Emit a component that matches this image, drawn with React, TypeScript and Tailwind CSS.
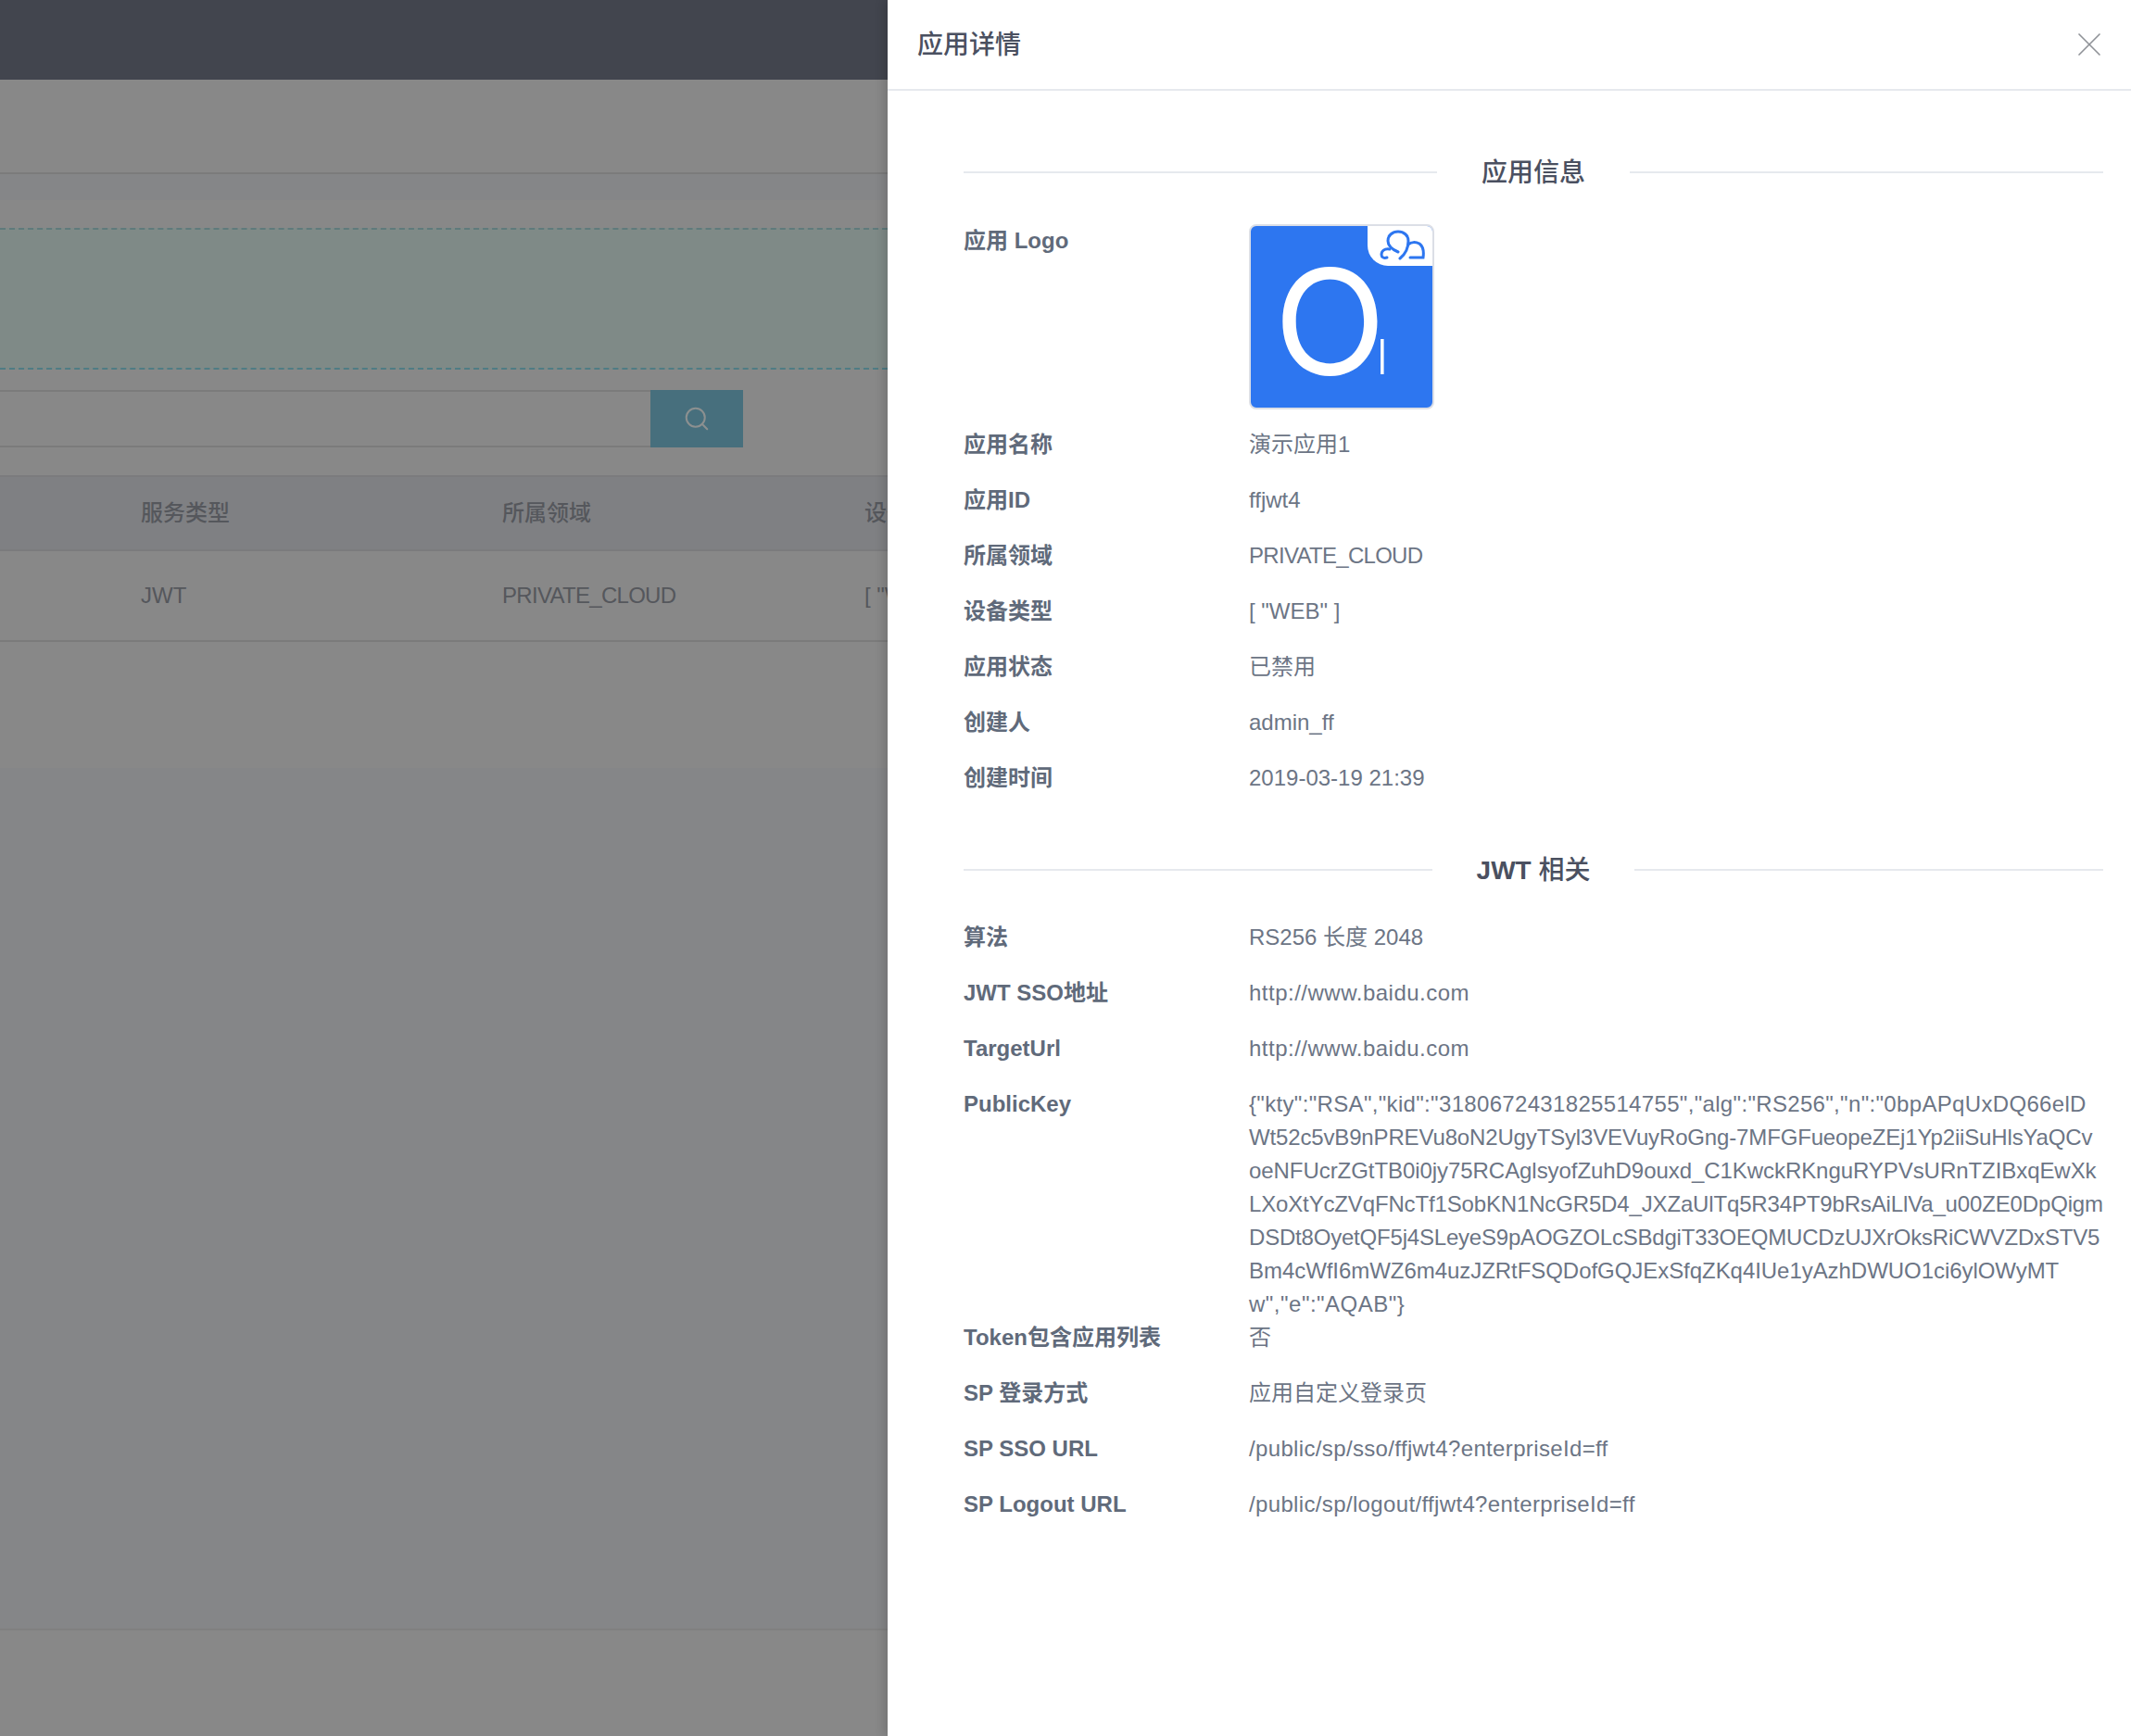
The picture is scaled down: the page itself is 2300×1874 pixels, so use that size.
import type { ReactNode } from "react";
import { Search, X } from "lucide-react";

const font = "font-['Liberation_Sans','Noto_Sans_CJK_SC',sans-serif]";

const infoRows = [
  { label: "应用名称", value: "演示应用1" },
  { label: "应用ID", value: "ffjwt4" },
  { label: "所属领域", value: "PRIVATE_CLOUD", tracking: "tracking-[-0.7px]" },
  { label: "设备类型", value: '[ "WEB" ]' },
  { label: "应用状态", value: "已禁用" },
  { label: "创建人", value: "admin_ff" },
  { label: "创建时间", value: "2019-03-19 21:39" },
];

const jwtTop = [
  { label: "算法", value: "RS256 长度 2048" },
  { label: "JWT SSO地址", value: "http://www.baidu.com", tracking: "tracking-[0.5px]" },
  { label: "TargetUrl", value: "http://www.baidu.com", tracking: "tracking-[0.5px]" },
];

const publicKey = [
  { text: '{"kty":"RSA","kid":"3180672431825514755","alg":"RS256","n":"0bpAPqUxDQ66elD', tracking: "tracking-[0.33px]" },
  { text: "Wt52c5vB9nPREVu8oN2UgyTSyl3VEVuyRoGng-7MFGFueopeZEj1Yp2iiSuHlsYaQCv", tracking: "tracking-[-0.15px]" },
  { text: "oeNFUcrZGtTB0i0jy75RCAglsyofZuhD9ouxd_C1KwckRKnguRYPVsURnTZIBxqEwXk", tracking: "tracking-[-0.06px]" },
  { text: "LXoXtYcZVqFNcTf1SobKN1NcGR5D4_JXZaUlTq5R34PT9bRsAiLlVa_u00ZE0DpQigm", tracking: "tracking-[-0.15px]" },
  { text: "DSDt8OyetQF5j4SLeyeS9pAOGZOLcSBdgiT33OEQMUCDzUJXrOksRiCWVZDxSTV5", tracking: "tracking-[-0.2px]" },
  { text: "Bm4cWfI6mWZ6m4uzJZRtFSQDofGQJExSfqZKq4IUe1yAzhDWUO1ci6ylOWyMT", tracking: "tracking-[-0.05px]" },
  { text: 'w","e":"AQAB"}', tracking: "tracking-[0.5px]" },
];

const jwtBottom = [
  { label: "Token包含应用列表", value: "否" },
  { label: "SP 登录方式", value: "应用自定义登录页" },
  { label: "SP SSO URL", value: "/public/sp/sso/ffjwt4?enterpriseId=ff", tracking: "tracking-[0.35px]" },
  { label: "SP Logout URL", value: "/public/sp/logout/ffjwt4?enterpriseId=ff", tracking: "tracking-[0.35px]" },
];

function Row({ label, value, tracking = "" }: { label: string; value: string; tracking?: string }) {
  return (
    <div className="flex h-[60px] leading-[36px]">
      <div className="w-[308px] shrink-0 font-bold text-[#606a7a]">{label}</div>
      <div className={`text-[#6c7585] ${tracking}`}>{value}</div>
    </div>
  );
}

function SectionTitle({ children }: { children: ReactNode }) {
  return (
    <div className="flex h-[40px] items-center gap-[48px]">
      <div className="h-[2px] flex-1 bg-[#e6e9ee]" />
      <div className="pt-[1px] text-[28px] font-medium text-[#4a5060]">{children}</div>
      <div className="h-[2px] flex-1 bg-[#e6e9ee]" />
    </div>
  );
}

function AppLogo() {
  return (
    <div className="relative h-[200px] w-[200px] rounded-[8px] border-2 border-[#dcdfe6] bg-[#2d76f0] font-['Inter',sans-serif] text-white">
      <div className="flex items-baseline pt-[24px] pl-[25px] leading-none">
        <span className="text-[158px] font-normal tracking-[-10px]">O</span>
        <span className="text-[52px] font-light">l</span>
      </div>
      <div className="absolute top-0 right-0 h-[43px] w-[70px] rounded-tr-[6px] rounded-bl-[22px] bg-white">
        <svg viewBox="0 0 70 43" className="h-full w-full" fill="none" stroke="#2d76f0" strokeWidth="3" strokeLinecap="round">
          <path d="M33 28C26 25 22 21 22 16C22 10 27 6 33 6C39 6 44 10 44 16C44 24 40 31 35 35" />
          <path d="M24 25C18 24 15 27 15 31C15 34 18 35 21 34" />
          <path d="M44 20C47 17 52 17 56 19C60 22 61 27 60 34H46" />
        </svg>
      </div>
    </div>
  );
}

export default function App() {
  return (
    <div className={`flex h-[1874px] w-[2300px] overflow-hidden text-[24px] ${font}`}>
      <div className="flex w-[958px] shrink-0 flex-col bg-[#888888] text-[#55575c]">
        <div className="h-[86px] bg-[#42454e]" />
        <div className="h-[102px] border-b-2 border-[#7b7b7b]" />
        <div className="h-[28px] bg-[#858688]" />
        <div className="h-[30px]" />
        <div className="h-[153px] border-t-2 border-b-2 border-dashed border-t-[#5f7a7c] border-b-[#4f7c84] bg-[#7f8a87]" />
        <div className="mt-[22px] flex h-[62px] w-[802px]">
          <div className="flex-1 border-y-2 border-[#7b7b7b]" />
          <div className="flex w-[100px] items-center justify-center bg-[#476f7d] text-[#8c9090]">
            <Search size={30} strokeWidth={1.6} />
          </div>
        </div>
        <div className="mt-[30px] flex h-[82px] items-center overflow-hidden border-y-2 border-[#7b7b7d] bg-[#7f8083] whitespace-nowrap">
          <div className="ml-[152px] w-[390px] shrink-0 font-medium">服务类型</div>
          <div className="w-[391px] shrink-0 font-medium">所属领域</div>
          <div className="shrink-0 font-medium">设备类型</div>
        </div>
        <div className="flex h-[98px] items-center overflow-hidden border-b-2 border-[#7b7b7b] whitespace-nowrap">
          <div className="ml-[152px] w-[390px] shrink-0">JWT</div>
          <div className="w-[391px] shrink-0 tracking-[-0.7px]">PRIVATE_CLOUD</div>
          <div className="shrink-0">[ "WEB" ]</div>
        </div>
        <div className="h-[136px]" />
        <div className="h-[931px] border-b-2 border-[#808080] bg-[#858688]" />
      </div>

      <div className="z-10 flex w-[1342px] shrink-0 flex-col bg-white shadow-[-4px_0_10px_rgba(0,0,0,0.15)]">
        <div className="flex h-[98px] items-center justify-between border-b-2 border-[#e6e9ee] pr-[23px] pl-[32px]">
          <div className="pt-[2px] text-[28px] font-medium text-[#4a5060]">应用详情</div>
          <X size={44} strokeWidth={0.9} className="text-[#8f9297]" />
        </div>

        <div className="flex flex-col pt-[68px] pr-[30px] pl-[82px]">
          <SectionTitle>应用信息</SectionTitle>
          <div className="mt-[36px] flex h-[220px] leading-[36px]">
            <div className="w-[308px] shrink-0 font-bold text-[#606a7a]">应用 Logo</div>
            <AppLogo />
          </div>
          {infoRows.map((row) => (
            <Row key={row.label} label={row.label} value={row.value} tracking={row.tracking} />
          ))}

          <div className="mt-[37px]">
            <SectionTitle>
              <span className="font-bold">JWT</span> 相关
            </SectionTitle>
          </div>
          <div className="mt-[35px]">
            {jwtTop.map((row) => (
              <Row key={row.label} label={row.label} value={row.value} tracking={row.tracking} />
            ))}
            <div className="flex leading-[36px]">
              <div className="w-[308px] shrink-0 font-bold text-[#606a7a]">PublicKey</div>
              <div className="text-[#6c7585] whitespace-nowrap">
                {publicKey.map((line) => (
                  <div key={line.text} className={line.tracking}>
                    {line.text}
                  </div>
                ))}
              </div>
            </div>
            {jwtBottom.map((row) => (
              <Row key={row.label} label={row.label} value={row.value} tracking={row.tracking} />
            ))}
          </div>
        </div>
      </div>
    </div>
  );
}
